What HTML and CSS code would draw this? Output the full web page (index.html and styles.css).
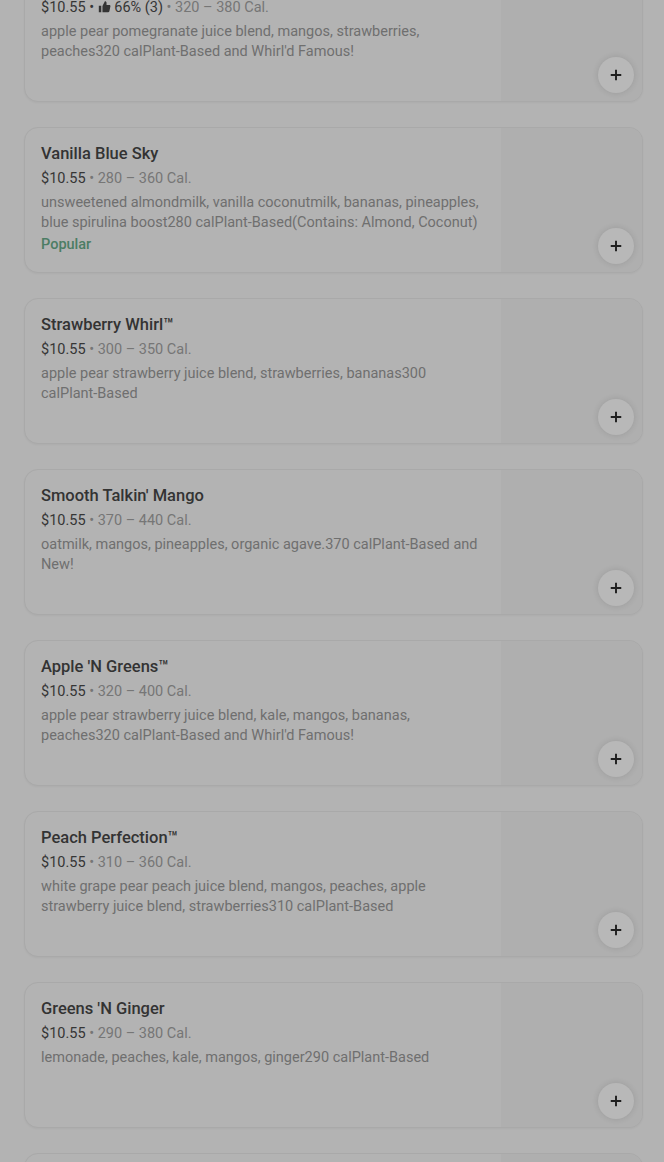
FILE: index.html
```html
<!DOCTYPE html>
<html lang="en">
<head>
<meta charset="utf-8">
<title>Menu</title>
<link rel="stylesheet" href="styles.css">
</head>
<body>
<main class="list">
  <article class="card card-cut">
    <div class="info">
      <p class="meta"><span class="price">$10.55 • <svg class="thumb" viewBox="0 0 16 16" width="13" height="13"><path d="M1 7h3v8H1z M5.5 7.5 8.5 1.5c1.2 0 2 .8 2 2V6h3.5c.9 0 1.5.8 1.3 1.7l-1.3 6c-.2.8-.8 1.3-1.6 1.3H5.5z" fill="#333"/></svg> 66% (3)</span> • 320 – 380 Cal.</p>
      <p class="desc">apple pear pomegranate juice blend, mangos, strawberries, peaches320 calPlant-Based and Whirl'd Famous!</p>
    </div>
    <div class="thumbimg"></div>
    <button class="add" aria-label="Add"><svg viewBox="0 0 16 16" width="14" height="14"><path d="M8 2v12M2 8h12" stroke="#1f1f1f" stroke-width="2.2"/></svg></button>
  </article>

  <article class="card">
    <div class="info">
      <h3 class="title">Vanilla Blue Sky</h3>
      <p class="meta"><span class="price">$10.55</span> • 280 – 360 Cal.</p>
      <p class="desc">unsweetened almondmilk, vanilla coconutmilk, bananas, pineapples, blue spirulina boost280 calPlant-Based(Contains: Almond, Coconut)</p>
      <p class="tag">Popular</p>
    </div>
    <div class="thumbimg"></div>
    <button class="add" aria-label="Add"><svg viewBox="0 0 16 16" width="14" height="14"><path d="M8 2v12M2 8h12" stroke="#1f1f1f" stroke-width="2.2"/></svg></button>
  </article>

  <article class="card">
    <div class="info">
      <h3 class="title">Strawberry Whirl™</h3>
      <p class="meta"><span class="price">$10.55</span> • 300 – 350 Cal.</p>
      <p class="desc">apple pear strawberry juice blend, strawberries, bananas300 calPlant-Based</p>
    </div>
    <div class="thumbimg"></div>
    <button class="add" aria-label="Add"><svg viewBox="0 0 16 16" width="14" height="14"><path d="M8 2v12M2 8h12" stroke="#1f1f1f" stroke-width="2.2"/></svg></button>
  </article>

  <article class="card">
    <div class="info">
      <h3 class="title">Smooth Talkin' Mango</h3>
      <p class="meta"><span class="price">$10.55</span> • 370 – 440 Cal.</p>
      <p class="desc">oatmilk, mangos, pineapples, organic agave.370 calPlant-Based and New!</p>
    </div>
    <div class="thumbimg"></div>
    <button class="add" aria-label="Add"><svg viewBox="0 0 16 16" width="14" height="14"><path d="M8 2v12M2 8h12" stroke="#1f1f1f" stroke-width="2.2"/></svg></button>
  </article>

  <article class="card">
    <div class="info">
      <h3 class="title">Apple 'N Greens™</h3>
      <p class="meta"><span class="price">$10.55</span> • 320 – 400 Cal.</p>
      <p class="desc">apple pear strawberry juice blend, kale, mangos, bananas, peaches320 calPlant-Based and Whirl'd Famous!</p>
    </div>
    <div class="thumbimg"></div>
    <button class="add" aria-label="Add"><svg viewBox="0 0 16 16" width="14" height="14"><path d="M8 2v12M2 8h12" stroke="#1f1f1f" stroke-width="2.2"/></svg></button>
  </article>

  <article class="card">
    <div class="info">
      <h3 class="title">Peach Perfection™</h3>
      <p class="meta"><span class="price">$10.55</span> • 310 – 360 Cal.</p>
      <p class="desc">white grape pear peach juice blend, mangos, peaches, apple strawberry juice blend, strawberries310 calPlant-Based</p>
    </div>
    <div class="thumbimg"></div>
    <button class="add" aria-label="Add"><svg viewBox="0 0 16 16" width="14" height="14"><path d="M8 2v12M2 8h12" stroke="#1f1f1f" stroke-width="2.2"/></svg></button>
  </article>

  <article class="card">
    <div class="info">
      <h3 class="title">Greens 'N Ginger</h3>
      <p class="meta"><span class="price">$10.55</span> • 290 – 380 Cal.</p>
      <p class="desc">lemonade, peaches, kale, mangos, ginger290 calPlant-Based</p>
    </div>
    <div class="thumbimg"></div>
    <button class="add" aria-label="Add"><svg viewBox="0 0 16 16" width="14" height="14"><path d="M8 2v12M2 8h12" stroke="#1f1f1f" stroke-width="2.2"/></svg></button>
  </article>

  <article class="card card-partial">
    <div class="thumbimg"></div>
  </article>
</main>
</body>
</html>
```

FILE: styles.css
```css
html, body {
  margin: 0;
  padding: 0;
  background: #b3b3b3;
  height: 1162px;
  overflow: hidden;
}

body {
  font-family: Roboto, "Liberation Sans", sans-serif;
  color: #333;
}

.list {
  display: flex;
  flex-direction: column;
  gap: 25px;
  padding: 0 21px 0 24px;
  margin-top: -44px;
}

.card {
  position: relative;
  display: flex;
  height: 144px;
  border: 1px solid #a9a9a9;
  border-radius: 14px;
  background: #b3b3b3;
  overflow: hidden;
  box-shadow: 0 1px 2px rgba(0, 0, 0, 0.04);
}

.card-cut .info {
  padding-top: 41px;
}

.card-partial {
  justify-content: flex-end;
}

.info {
  flex: 1;
  padding: 16px 16px 0 16px;
  min-width: 0;
}

.title {
  margin: 0 0 5px;
  font-size: 16.5px;
  line-height: 20px;
  font-weight: 500;
  color: #333;
}

.meta {
  margin: 0 0 4px;
  font-size: 14.5px;
  line-height: 20px;
  color: #767676;
}

.price {
  color: #363636;
}

.thumb {
  vertical-align: -1px;
}

.desc {
  margin: 0;
  font-size: 14.5px;
  line-height: 20px;
  color: #6f6f6f;
}

.tag {
  margin: 2px 0 0;
  font-size: 14.5px;
  line-height: 20px;
  font-weight: 500;
  color: #4c7d64;
}

.thumbimg {
  flex: none;
  width: 141px;
  background: #afafaf;
}

.add {
  position: absolute;
  right: 8px;
  bottom: 8px;
  width: 36px;
  height: 36px;
  border: none;
  border-radius: 50%;
  background: #b8b8b8;
  box-shadow: 0 0 6px rgba(0, 0, 0, 0.12);
  display: flex;
  align-items: center;
  justify-content: center;
  padding: 0;
}
```
